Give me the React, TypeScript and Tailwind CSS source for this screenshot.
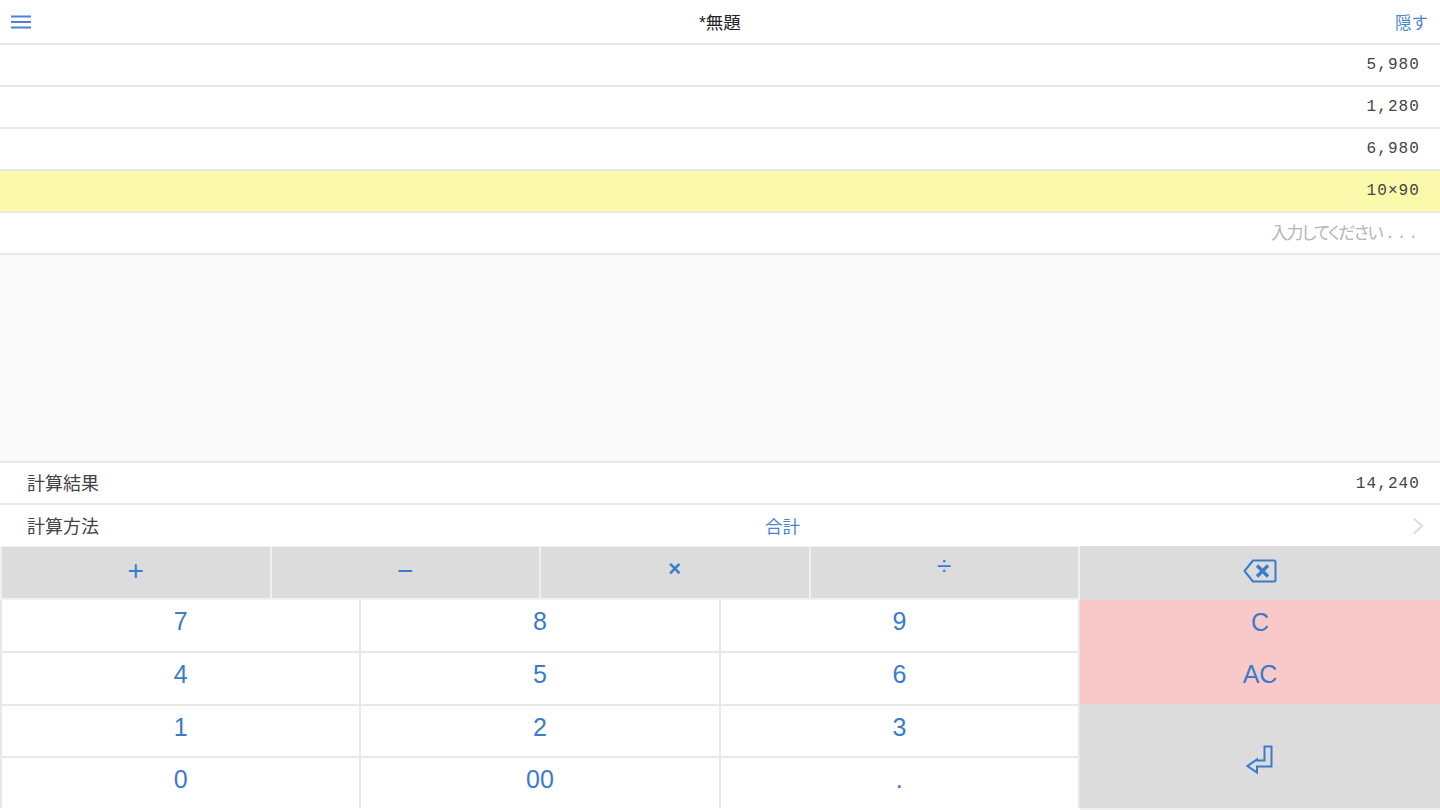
import React from "react";

const sans = "font-['Liberation_Sans','Noto_Sans_CJK_JP',sans-serif]";
const blue = "text-[#3a7bcc]";
const mono = "font-['Liberation_Mono','Noto_Sans_CJK_JP',monospace]";

function Row({ value, yellow }: { value: string; yellow?: boolean }) {
  return (
    <div className={`h-[42px] shrink-0 border-b-2 border-[#e8e8e8] flex items-center justify-end pr-[20px] text-[16px] tracking-[1.1px] text-[#444] ${mono} ${yellow ? "bg-[#fbf9ab]" : "bg-white"}`}>
      {value}
    </div>
  );
}

function Op({ label, size }: { label: string; size: string }) {
  return (
    <div className={`flex-1 h-full flex items-center justify-center border-r-2 border-[#f0f0f0] ${blue} ${size}`}>
      {label}
    </div>
  );
}

function Num({ label, bottom }: { label: string; bottom?: boolean }) {
  return (
    <div className={`flex items-center justify-center bg-white text-[25px] pb-[7px] border-r-2 border-[#e8e8e8] ${blue} ${bottom ? "" : "border-b-2"}`}>
      {label}
    </div>
  );
}

export default function App() {
  return (
    <div className={`w-[1440px] h-[810px] flex flex-col overflow-hidden bg-white ${sans}`}>
      <header className="h-[45px] shrink-0 border-b-2 border-[#e8e8e8] flex items-center pl-[11px] pr-[12px] bg-white">
        <svg width="20" height="16" viewBox="0 0 20 16" className="text-[#4a85cc]" fill="none" stroke="currentColor" strokeWidth="2">
          <path d="M0 2.5h20M0 8h20M0 13.5h20" />
        </svg>
        <span className="text-[17.5px] text-[#222] ml-[668px] pt-[3px]">*無題</span>
        <span className="text-[16.5px] text-[#4a85cc] ml-auto pt-[3px]">隠す</span>
      </header>
      <Row value="5,980" />
      <Row value="1,280" />
      <Row value="6,980" />
      <Row value="10×90" yellow />
      <div className="h-[42px] shrink-0 border-b-2 border-[#e8e8e8] flex items-center justify-end pr-[20px] pt-[2px] text-[#b5b5b5]">
        <span className="text-[17px] tracking-[-1.5px] [font-feature-settings:'palt']">入力してください</span>
        <span className={`text-[16px] tracking-[2px] ml-[3px] ${mono}`}>...</span>
      </div>
      <div className="h-[208px] shrink-0 bg-[#f9f9f9] border-b-2 border-[#e8e8e8]" />
      <div className="h-[42px] shrink-0 border-b-2 border-[#e8e8e8] flex items-center justify-between pl-[27px] pr-[20px] pt-[1px]">
        <span className="text-[18px] text-[#444] pt-[1px]">計算結果</span>
        <span className={`text-[16px] tracking-[1.1px] text-[#444] ${mono}`}>14,240</span>
      </div>
      <div className="h-[41px] shrink-0 flex items-center pl-[27px] pr-[16px] pt-[3px]">
        <span className="text-[18px] text-[#444] w-[738px]">計算方法</span>
        <span className="text-[17.5px] text-[#4a85cc]">合計</span>
        <svg className="ml-auto -mt-[3px]" width="12" height="18" viewBox="0 0 12 18" fill="none" stroke="#dcdcdc" strokeWidth="2">
          <path d="M2 1.5 10 9 2 16.5" />
        </svg>
      </div>
      <div className="flex-1 min-h-0 flex">
        <div className="w-[1080px] flex flex-col">
          <div className="h-[54px] shrink-0 flex bg-[#dcdcdc] border-t border-b-2 border-l-2 border-[#f0f0f0]">
            <Op label="+" size="text-[28px] pb-[4px]" />
            <Op label="−" size="text-[28px] pb-[4px]" />
            <Op label="×" size="text-[22px] pb-[8px] font-bold" />
            <Op label="÷" size="text-[26px] pb-[12px]" />
          </div>
          <div className="flex-1 min-h-0 grid grid-cols-3 grid-rows-[repeat(3,52.8px)_1fr] mb-[2px] border-l-2 border-[#e8e8e8]">
            <Num label="7" /><Num label="8" /><Num label="9" />
            <Num label="4" /><Num label="5" /><Num label="6" />
            <Num label="1" /><Num label="2" /><Num label="3" />
            <Num label="0" bottom /><Num label="00" bottom /><Num label="." bottom />
          </div>
        </div>
        <div className="w-[360px] flex flex-col">
          <div className="h-[54px] shrink-0 bg-[#dcdcdc] flex items-center justify-center pb-[4px]">
            <svg width="34" height="24" viewBox="0 0 34 24" fill="none" stroke="#3a7bcc" strokeWidth="2">
              <path d="M10 1.5h21a1.5 1.5 0 0 1 1.5 1.5v18a1.5 1.5 0 0 1-1.5 1.5H10L1.5 12Z" strokeLinejoin="round" />
              <path d="M14 6.5l11 11M25 6.5l-11 11" strokeWidth="3.4" />
            </svg>
          </div>
          <div className={`h-[52px] shrink-0 bg-[#f9c9c9] flex items-center justify-center text-[25px] pb-[6px] ${blue}`}>C</div>
          <div className={`h-[52px] shrink-0 bg-[#f9c9c9] flex items-center justify-center text-[25px] pb-[6px] ${blue}`}>AC</div>
          <div className="flex-1 bg-[#dcdcdc] border-b-2 border-[#eeeeee] flex items-center justify-center pt-[8px]">
            <svg width="28" height="30" viewBox="0 0 28 30" fill="none" stroke="#3a7bcc" strokeWidth="2">
              <path d="M18.5 1.5h7v20H11v6L1.5 21 11 14.5v1h7.5Z" strokeLinejoin="miter" />
            </svg>
          </div>
        </div>
      </div>
    </div>
  );
}
